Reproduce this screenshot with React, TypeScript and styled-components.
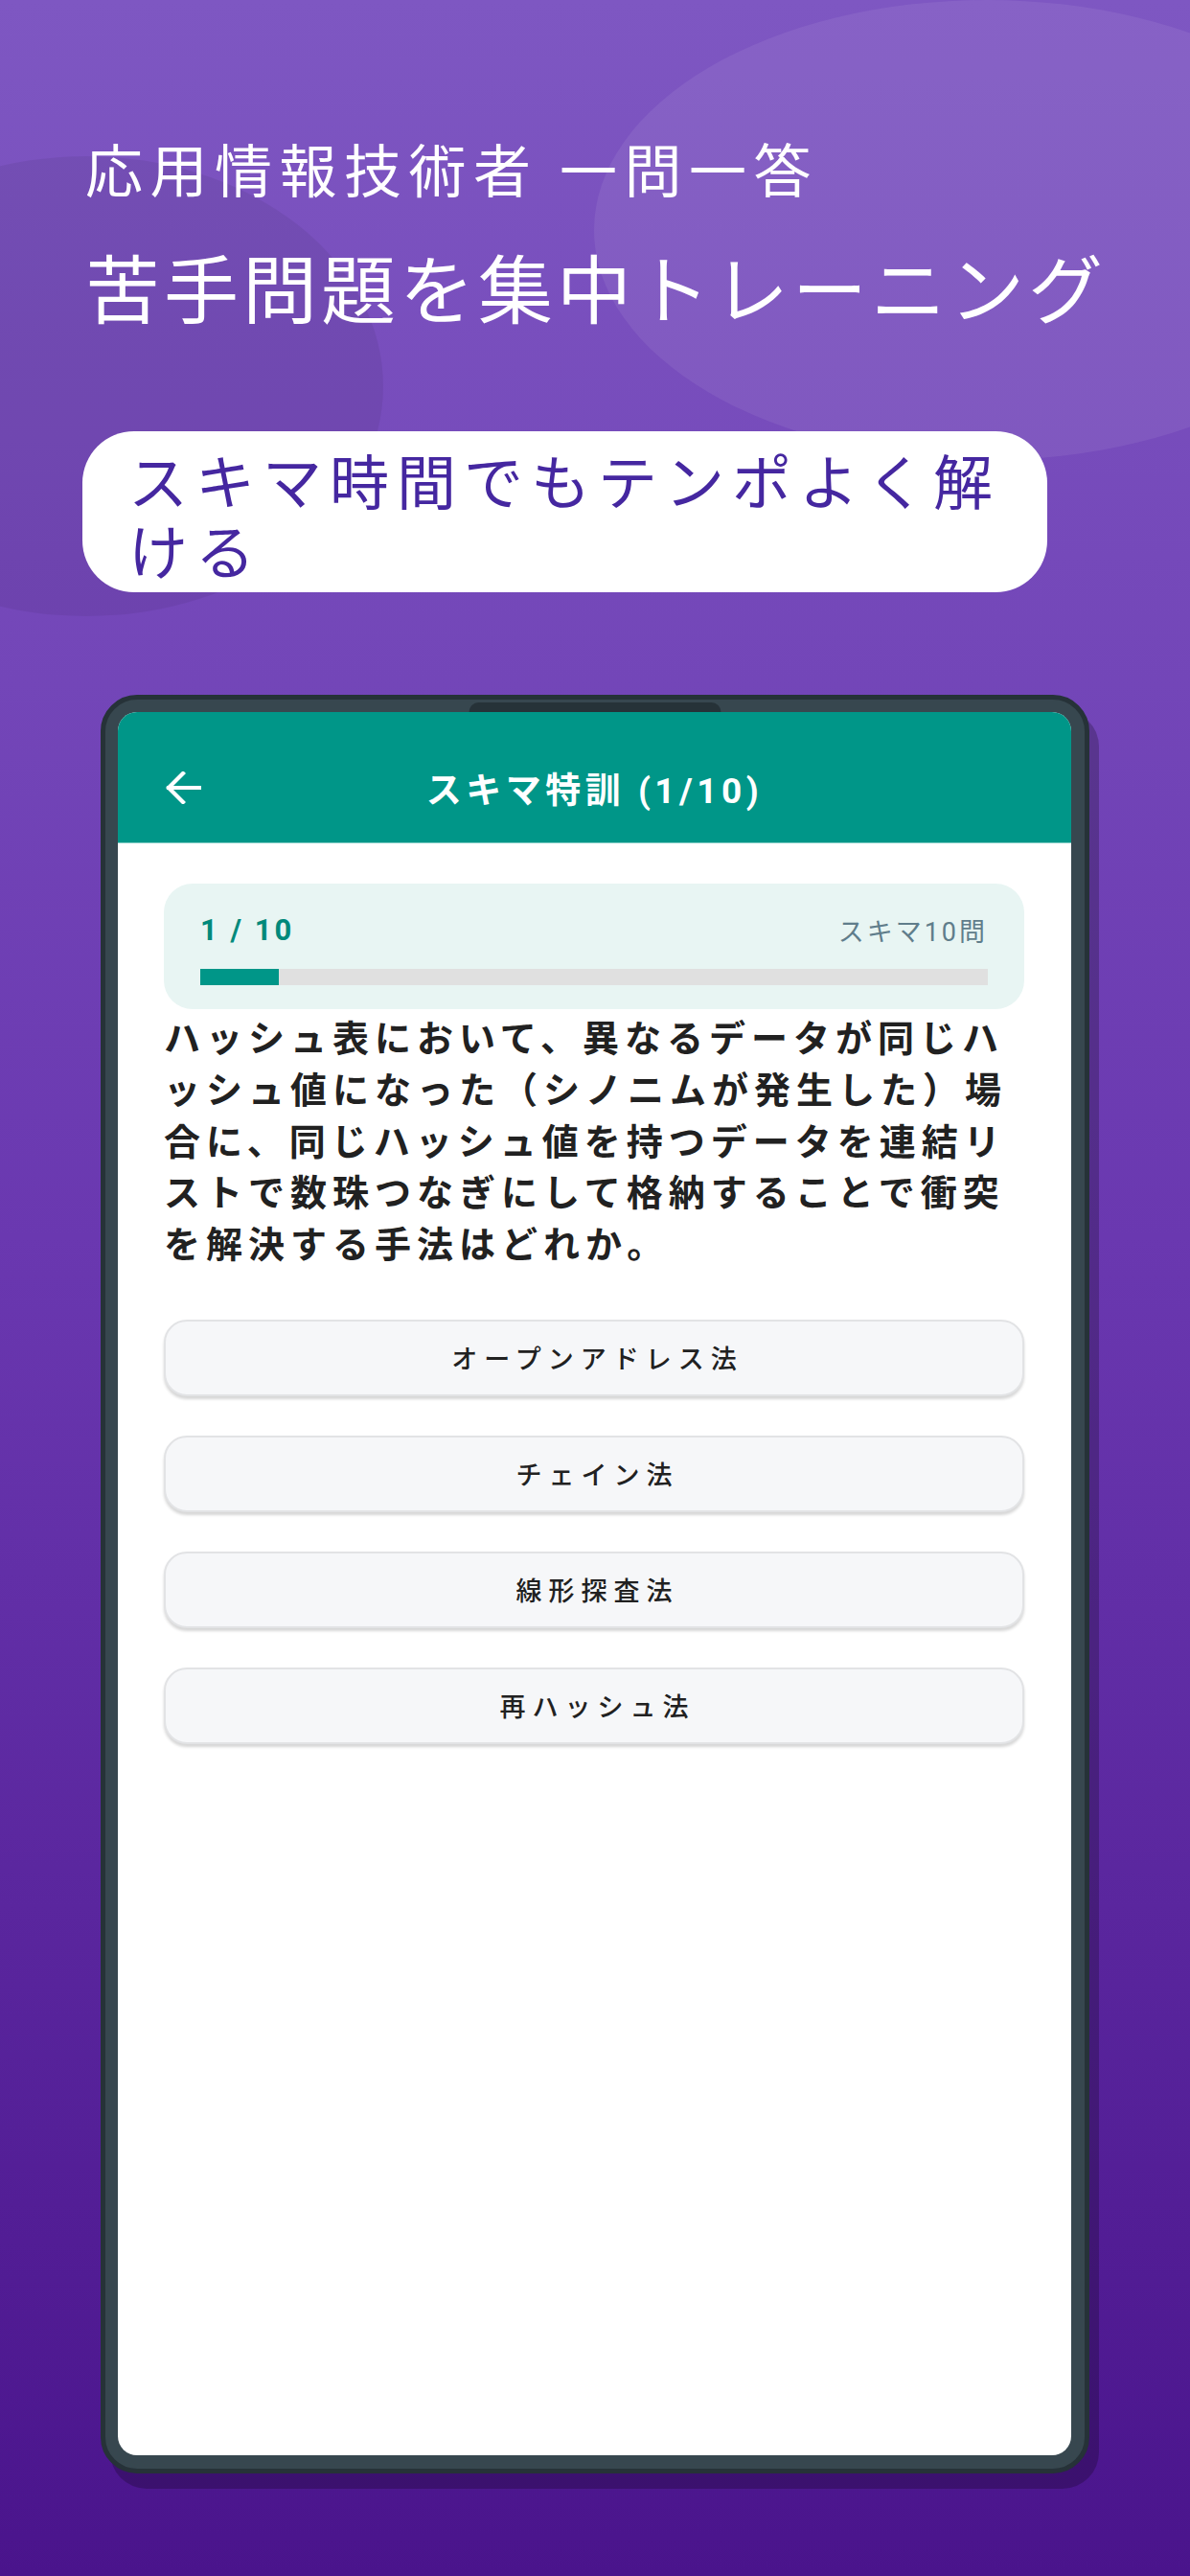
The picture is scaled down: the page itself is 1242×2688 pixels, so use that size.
import * as React from 'react';
import styled, { createGlobalStyle } from 'styled-components';

const FONT = `Roboto, "Noto Sans CJK JP", "Noto Sans", sans-serif`;

const GlobalStyle = createGlobalStyle`
  html, body {
    margin: 0;
    padding: 0;
  }
  body {
    font-family: ${FONT};
    -webkit-font-smoothing: antialiased;
  }
  * {
    box-sizing: border-box;
  }
`;

const Page = styled.div`
  position: relative;
  width: 1242px;
  min-height: 2688px;
  overflow: hidden;
  display: flex;
  flex-direction: column;
  background: linear-gradient(180deg, #7e57c2 0%, #6a38b0 48%, #4a148c 100%);
`;

const Blob = styled.div<{ $left: number; $top: number; $w: number; $h: number; $tint: string }>`
  position: absolute;
  left: ${(p) => p.$left}px;
  top: ${(p) => p.$top}px;
  width: ${(p) => p.$w}px;
  height: ${(p) => p.$h}px;
  border-radius: 50%;
  background: ${(p) => p.$tint};
  pointer-events: none;
`;

const Hero = styled.header`
  position: relative;
  display: flex;
  flex-direction: column;
  align-items: flex-start;
  padding: 145px 0 0 86px;
`;

const Kicker = styled.h2`
  margin: 0 0 0 3px;
  font-size: 60px;
  line-height: 72px;
  font-weight: 400;
  letter-spacing: 7.5px;
  color: #ffffff;
`;

const Headline = styled.h1`
  margin: 42px 0 0 3px;
  font-size: 78px;
  line-height: 94px;
  font-weight: 400;
  letter-spacing: 4px;
  color: #ffffff;
`;

const Pill = styled.div`
  margin-top: 97px;
  width: 1007px;
  padding: 19px 40px 3px 48px;
  border-radius: 54px;
  background: #ffffff;
  color: #4527a0;
  font-size: 62px;
  line-height: 73px;
  letter-spacing: 8px;
  line-break: anywhere;
`;

const PhoneFrame = styled.div`
  position: relative;
  align-self: center;
  margin-top: 107px;
  width: 1032px;
  height: 1856px;
  padding: 13px 14px 14px 13px;
  border: 5px solid #263238;
  border-radius: 38px;
  background: #37474f;
  box-shadow: 10px 16px 0 rgba(0, 0, 0, 0.22);
  display: flex;
`;

const Notch = styled.div`
  position: absolute;
  top: 3px;
  left: 50%;
  width: 263px;
  height: 10px;
  transform: translateX(-50%);
  border-radius: 12px 12px 0 0;
  background: #263238;
`;

const Screen = styled.div`
  flex: 1;
  display: flex;
  flex-direction: column;
  border-radius: 20px;
  overflow: hidden;
  background: #ffffff;
`;

const AppBar = styled.div`
  height: 137px;
  padding-top: 22px;
  display: flex;
  align-items: center;
  background: #009688;
  border-bottom: 1px solid #7fcbc3;
`;

const BarSide = styled.div`
  width: 98px;
  height: 100%;
  display: flex;
  align-items: center;
  padding-left: 49px;
`;

const BarTitle = styled.div`
  flex: 1;
  text-align: center;
  color: #ffffff;
  font-size: 37px;
  font-weight: 700;
  letter-spacing: 4.5px;
`;

const Body = styled.main`
  display: flex;
  flex-direction: column;
  padding: 42px 49px 0 48px;
`;

const ProgressCard = styled.section`
  padding: 28px 38px 25px;
  border-radius: 30px;
  background: #e8f5f3;
`;

const ProgressRow = styled.div`
  height: 40px;
  display: flex;
  align-items: center;
  justify-content: space-between;
`;

const Count = styled.span`
  color: #00897b;
  font-size: 31px;
  font-weight: 700;
  letter-spacing: 3px;
`;

const SetLabel = styled.span`
  color: #607d8b;
  font-size: 27px;
  letter-spacing: 3px;
`;

const Track = styled.div`
  margin-top: 21px;
  height: 17px;
  background: #e0e0e0;
`;

const Fill = styled.div`
  height: 100%;
  background: #009688;
`;

const Question = styled.p`
  margin: 5px 0 0;
  color: #212121;
  font-size: 38px;
  line-height: 53.75px;
  font-weight: 700;
  letter-spacing: 6px;
  line-break: anywhere;
`;

const Options = styled.div`
  margin-top: 50px;
  display: flex;
  flex-direction: column;
  gap: 41px;
`;

const Option = styled.button`
  height: 80px;
  padding: 0 0 0 7px;
  border: 2px solid #e2e3e5;
  border-radius: 24px;
  background: #f6f7f9;
  box-shadow: 0 3px 3px rgba(0, 0, 0, 0.16);
  color: #212121;
  font-family: ${FONT};
  font-size: 27px;
  font-weight: 500;
  letter-spacing: 7px;
  cursor: pointer;
`;

const BackArrow = () => (
  <svg width="38" height="34" viewBox="0 0 38 34" fill="none">
    <path d="M37 17H4M19 2L4 17l15 15" stroke="#ffffff" strokeWidth="4.2" strokeLinecap="square" />
  </svg>
);

const choices = ['オープンアドレス法', 'チェイン法', '線形探査法', '再ハッシュ法'];

const question =
  'ハッシュ表において、異なるデータが同じハッシュ値になった（シノニムが発生した）場合に、同じハッシュ値を持つデータを連結リストで数珠つなぎにして格納することで衝突を解決する手法はどれか。';

const App: React.FC = () => {
  const current = 1;
  const total = 10;

  return (
    <Page>
      <GlobalStyle />
      <Blob $left={620} $top={0} $w={820} $h={480} $tint="rgba(255, 255, 255, 0.07)" />
      <Blob $left={-220} $top={163} $w={620} $h={480} $tint="rgba(0, 0, 0, 0.06)" />

      <Hero>
        <Kicker>応用情報技術者 一問一答</Kicker>
        <Headline>苦手問題を集中トレーニング</Headline>
        <Pill>スキマ時間でもテンポよく解ける</Pill>
      </Hero>

      <PhoneFrame>
        <Notch />
        <Screen>
          <AppBar>
            <BarSide>
              <BackArrow />
            </BarSide>
            <BarTitle>{`スキマ特訓 (${current}/${total})`}</BarTitle>
            <BarSide />
          </AppBar>

          <Body>
            <ProgressCard>
              <ProgressRow>
                <Count>{`${current} / ${total}`}</Count>
                <SetLabel>スキマ10問</SetLabel>
              </ProgressRow>
              <Track>
                <Fill style={{ width: `${(current / total) * 100}%` }} />
              </Track>
            </ProgressCard>

            <Question>{question}</Question>

            <Options>
              {choices.map((choice) => (
                <Option key={choice}>{choice}</Option>
              ))}
            </Options>
          </Body>
        </Screen>
      </PhoneFrame>
    </Page>
  );
};

export default App;
